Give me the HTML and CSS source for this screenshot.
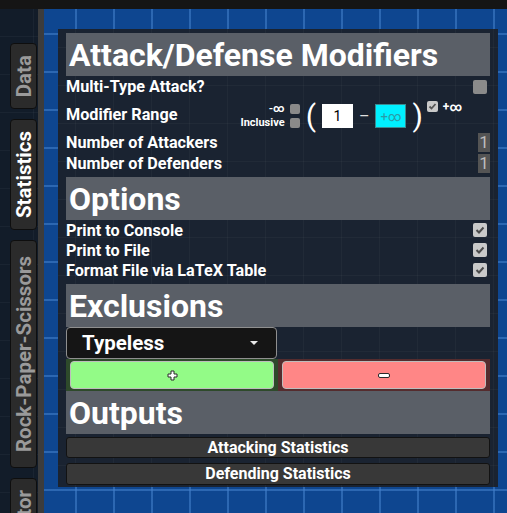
FILE: index.html
```html
<!DOCTYPE html>
<html>
<head>
<meta charset="utf-8">
<link rel="stylesheet" href="styles.css">
</head>
<body>
<div class="topbar"></div>
<div class="main">
  <nav class="sidebar">
    <div class="tab"><span>Data</span></div>
    <div class="tab active"><span>Statistics</span></div>
    <div class="tab"><span>Rock-Paper-Scissors</span></div>
    <div class="tab last"><span>tor</span></div>
  </nav>
  <div class="divider"></div>
  <div class="canvas">
    <div class="panel">
      <div class="header">Attack/Defense Modifiers</div>
      <div class="row r-multi"><span class="label">Multi-Type Attack?</span><span class="cb"></span></div>
      <div class="row r-range">
        <span class="label">Modifier Range</span>
        <div class="incl-text"><span>-∞</span><span>Inclusive</span></div>
        <div class="incl-boxes"><span class="cb small"></span><span class="cb small"></span></div>
        <span class="paren">(</span>
        <span class="box white">1</span>
        <span class="dash">–</span>
        <span class="box cyan">+∞</span>
        <span class="paren close">)</span>
        <span class="cb small checked top"><svg viewBox="0 0 11 11" width="11" height="11"><path d="M2.5 5.5 L4.5 7.5 L8.5 3" fill="none" stroke="#555" stroke-width="1.8"/></svg></span>
        <span class="pinf">+∞</span>
      </div>
      <div class="row r-num"><span class="label">Number of Attackers</span><span class="num">1</span></div>
      <div class="row r-num2"><span class="label">Number of Defenders</span><span class="num">1</span></div>

      <div class="header gap">Options</div>
      <div class="row r-opt"><span class="label">Print to Console</span><span class="cb checked"><svg viewBox="0 0 14 14" width="14" height="14"><path d="M3.5 7 L6 9.5 L10.5 4.5" fill="none" stroke="#4a4a4a" stroke-width="2"/></svg></span></div>
      <div class="row r-opt"><span class="label">Print to File</span><span class="cb checked"><svg viewBox="0 0 14 14" width="14" height="14"><path d="M3.5 7 L6 9.5 L10.5 4.5" fill="none" stroke="#4a4a4a" stroke-width="2"/></svg></span></div>
      <div class="row r-opt"><span class="label">Format File via LaTeX Table</span><span class="cb checked"><svg viewBox="0 0 14 14" width="14" height="14"><path d="M3.5 7 L6 9.5 L10.5 4.5" fill="none" stroke="#4a4a4a" stroke-width="2"/></svg></span></div>

      <div class="header gap">Exclusions</div>
      <div class="dropdown-row">
        <div class="dropdown"><span>Typeless</span><svg class="arrow" viewBox="0 0 8 4" width="8" height="4"><path d="M0 0 L8 0 L4 4 Z" fill="#e8e8e8"/></svg></div>
      </div>
      <div class="btn-row">
        <div class="btn-wrap green"><div class="btn add"><svg viewBox="0 0 11 11" width="11" height="11"><path d="M4 1 H7 V4 H10 V7 H7 V10 H4 V7 H1 V4 H4 Z" fill="#fff" stroke="#2a2a2a" stroke-width="1"/></svg></div></div>
        <div class="btn-wrap red"><div class="btn remove"><svg viewBox="0 0 12 5" width="12" height="5"><rect x="0.5" y="0.5" width="11" height="4" rx="1.5" fill="#fff" stroke="#2a2a2a" stroke-width="1"/></svg></div></div>
      </div>

      <div class="header">Outputs</div>
      <div class="out-btn first">Attacking Statistics</div>
      <div class="out-btn">Defending Statistics</div>
    </div>
  </div>
</div>
</body>
</html>
```

FILE: styles.css
```css
* { box-sizing: border-box; }

body {
  margin: 0;
  width: 507px;
  height: 513px;
  overflow: hidden;
  background: #0e4690;
  font-family: Roboto, "Liberation Sans", sans-serif;
  color: #fff;
}

.topbar {
  height: 9px;
  background: #151515;
}

.main {
  display: flex;
  height: 504px;
}

.sidebar {
  width: 38px;
  flex: none;
  background-color: #121c29;
  background-image:
    linear-gradient(90deg, rgba(255,255,255,0.035) 1px, transparent 1px),
    linear-gradient(0deg, rgba(255,255,255,0.035) 1px, transparent 1px);
  background-size: 38px 38px;
  background-position: 33px 0, 0 28px;
  padding: 34px 0 0 10px;
  display: flex;
  flex-direction: column;
  gap: 10px;
  overflow: hidden;
}

.tab {
  width: 27px;
  flex: none;
  background: #2b2b2b;
  border: 1px solid #0e0e0e;
  border-radius: 4px;
  padding: 11px 0;
  display: flex;
  justify-content: center;
  color: #9a9a9a;
  font-weight: 700;
  font-size: 20.5px;
}

.tab span {
  writing-mode: vertical-rl;
  transform: rotate(180deg);
  line-height: 26px;
}

.tab.active { color: #fff; }

.tab:nth-child(3) { padding: 15px 0; }

.tab.last {
  height: 60px;
  justify-content: center;
  align-items: flex-start;
}

.divider {
  width: 6px;
  flex: none;
  background: #3c3c3c;
}

.canvas {
  flex: 1;
  background-color: #0e4690;
  background-image:
    linear-gradient(90deg, rgba(70,130,205,0.55) 2px, transparent 2px),
    linear-gradient(0deg, rgba(70,130,205,0.55) 2px, transparent 2px);
  background-size: 38px 38px;
  background-position: 31px 0, 0 26px;
  padding: 20px 0 0 14px;
}

.panel {
  width: 440px;
  padding: 4px 8px 2px 8px;
  background-color: #1a2331;
  background-image:
    linear-gradient(90deg, rgba(255,255,255,0.03) 1px, transparent 1px),
    linear-gradient(0deg, rgba(255,255,255,0.03) 1px, transparent 1px);
  background-size: 38px 38px;
  background-position: 17px 0, 0 19px;
}

.header {
  height: 43px;
  line-height: 44px;
  background: #5a5f67;
  font-size: 32px;
  font-weight: 700;
  padding-left: 3px;
  white-space: nowrap;
}

.header.gap { margin-top: 4px; }

.row {
  display: flex;
  align-items: center;
  font-size: 16.2px;
  font-weight: 700;
}

.label { flex: 1; white-space: nowrap; }

.r-multi { height: 21px; }
.r-range { height: 35px; padding-right: 28px; }
.r-num { height: 21px; }
.r-num2 { height: 20px; }
.r-opt { height: 20px; }

.cb {
  width: 14px;
  height: 14px;
  border-radius: 2px;
  background: #8a8a8a;
  margin-right: 3px;
  flex: none;
  display: block;
}

.cb svg { display: block; }

.cb.checked { background: #c9c9c9; }

.cb.small {
  width: 10px;
  height: 10px;
  margin-right: 0;
}

.cb.small.checked {
  width: 11px;
  height: 11px;
}

.cb.top {
  align-self: flex-start;
  margin-top: 4px;
  margin-left: 0;
}

.incl-text {
  display: flex;
  flex-direction: column;
  align-items: flex-end;
  font-size: 11px;
  line-height: 14px;
  margin-top: 2px;
}

.incl-boxes {
  display: flex;
  flex-direction: column;
  gap: 4px;
  margin-left: 5px;
  margin-top: 2px;
}

.paren {
  font-weight: 400;
  font-size: 30px;
  line-height: 30px;
  margin: 2px 6px 0 6px;
}

.paren.close { margin-right: 4px; }

.box {
  width: 31px;
  height: 24px;
  display: flex;
  align-items: center;
  justify-content: center;
  font-weight: 400;
  margin-top: 3px;
}

.box.white {
  background: #fff;
  color: #000;
  font-size: 14px;
}

.box.cyan {
  background: #00f0ff;
  color: #2a9aa6;
  font-size: 13px;
  border: 1px solid #3a8a90;
}

.dash {
  font-weight: 400;
  font-size: 16px;
  color: #e0e0e0;
  margin: 3px 6px 0 6px;
}

.pinf {
  font-size: 12px;
  align-self: flex-start;
  margin-top: 3px;
  margin-left: 5px;
}

.num {
  width: 12px;
  height: 19px;
  background: #545454;
  color: #bdbdbd;
  font-weight: 400;
  font-size: 17px;
  line-height: 19px;
  text-align: center;
}

.dropdown-row { height: 32px; }

.dropdown {
  width: 211px;
  height: 32px;
  background: #151515;
  border: 1px solid #8f8f8f;
  border-radius: 4px;
  display: flex;
  align-items: center;
  padding: 0 18px 0 15px;
  font-size: 20.5px;
  font-weight: 700;
}

.dropdown span { flex: 1; }

.arrow { display: block; }

.btn-row {
  display: flex;
  height: 32px;
}

.btn-wrap {
  flex: 1;
  padding: 2px 4px 2px 4px;
}

.btn-wrap.green { background: #2e4a2b; }
.btn-wrap.red { background: #552c2e; }

.btn {
  height: 28px;
  border-radius: 4px;
  border: 1px solid #bdbdbd;
  display: flex;
  align-items: center;
  justify-content: center;
}

.btn svg { display: block; }

.btn.add { background: #93fb87; }
.btn.remove { background: #ff8686; }

.out-btn {
  height: 22px;
  margin-top: 5px;
  background: #383838;
  border: 1px solid #121212;
  border-radius: 3px;
  text-align: center;
  font-size: 16px;
  font-weight: 700;
  line-height: 20px;
}

.out-btn.first { margin-top: 3px; height: 21px; }
```
